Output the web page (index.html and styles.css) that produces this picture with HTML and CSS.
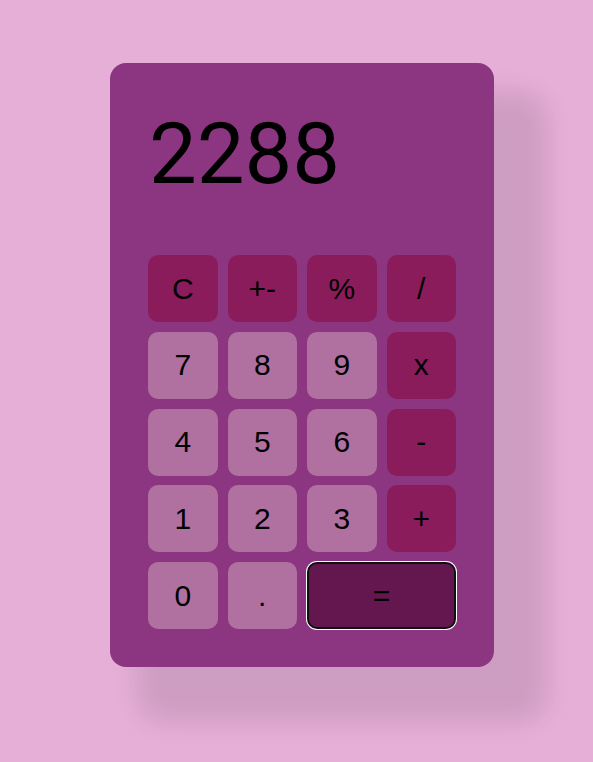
FILE: index.html
```html
<!DOCTYPE html>
<html lang="en">
<head>
<meta charset="utf-8">
<title>Calculator</title>
<link rel="stylesheet" href="styles.css">
</head>
<body>
<div class="calculator">
  <div class="display">2288</div>
  <div class="keys">
    <button class="key op">C</button>
    <button class="key op">+-</button>
    <button class="key op">%</button>
    <button class="key op">/</button>
    <button class="key num">7</button>
    <button class="key num">8</button>
    <button class="key num">9</button>
    <button class="key op">x</button>
    <button class="key num">4</button>
    <button class="key num">5</button>
    <button class="key num">6</button>
    <button class="key op">-</button>
    <button class="key num">1</button>
    <button class="key num">2</button>
    <button class="key num">3</button>
    <button class="key op">+</button>
    <button class="key num">0</button>
    <button class="key num">.</button>
    <button class="key equals">=</button>
  </div>
</div>
</body>
</html>
```
FILE: styles.css
```css
html, body {
  margin: 0;
  padding: 0;
}
body {
  background: #e6afd8;
  font-family: "Liberation Sans", Arial, sans-serif;
  min-height: 762px;
  padding-top: 63px;
  padding-left: 110px;
  box-sizing: border-box;
}
.calculator {
  width: 384px;
  box-sizing: border-box;
  padding: 38px;
  background: #8c3682;
  border-radius: 16px;
  box-shadow: 40px 42px 25px 14px rgba(0, 0, 0, 0.1);
  display: flex;
  flex-direction: column;
}
.display {
  height: 154px;
  box-sizing: border-box;
  padding-top: 3px;
  padding-left: 1px;
  font-family: Roboto, sans-serif;
  font-size: 85px;
  color: #000;
  line-height: normal;
}
.keys {
  display: grid;
  grid-template-columns: repeat(4, 1fr);
  grid-auto-rows: 67px;
  column-gap: 10px;
  row-gap: 9.75px;
}
.key {
  border: none;
  border-radius: 10px;
  font-family: "Liberation Sans", Arial, sans-serif;
  font-size: 30px;
  color: #000;
  padding: 0;
}
.op {
  background: #8a1c5c;
}
.num {
  background: #b070a0;
}
.equals {
  grid-column: span 2;
  background: #64164f;
  border: 2px solid #111;
  box-shadow: 0 0 0 1px #fff;
}
```
